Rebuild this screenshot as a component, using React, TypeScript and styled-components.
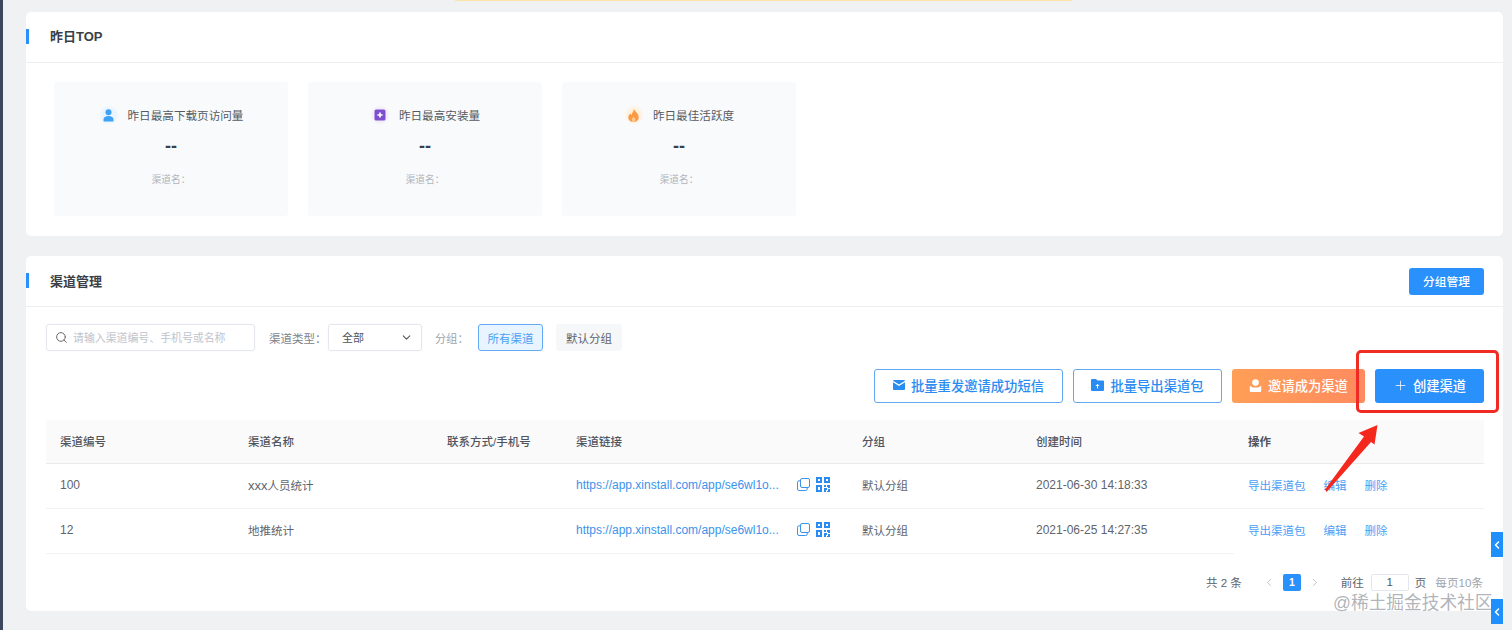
import styled, { createGlobalStyle } from "styled-components";
import { Search, ChevronDown, ChevronLeft, ChevronRight, Plus } from "lucide-react";

const GlobalStyle = createGlobalStyle`
  html, body { margin: 0; padding: 0; background: #f0f1f3; }
  body { font-family: "Liberation Sans", "Noto Sans CJK SC", sans-serif; }
  * { box-sizing: border-box; }
`;

const stats = [
  { kind: "user", title: "昨日最高下载页访问量" },
  { kind: "box", title: "昨日最高安装量" },
  { kind: "fire", title: "昨日最佳活跃度" },
];

const rows = [
  { id: "100", prefix: "xxx", name: "人员统计", time: "2021-06-30 14:18:33" },
  { id: "12", prefix: "", name: "地推统计", time: "2021-06-25 14:27:35" },
];

function StatIcon({ kind }: { kind: string }) {
  if (kind === "user") {
    return (
      <svg width="11" height="13" viewBox="0 0 11 13">
        <circle cx="5.500" cy="3.200" r="3" fill="#3ea2f7" />
        <path d="M.5 12.500V10.500C.5 8.200 2.500 7 5.500 7s5 1.200 5 3.500v2z" fill="#3ea2f7" />
      </svg>
    );
  }
  if (kind === "box") {
    return (
      <svg width="12" height="12" viewBox="0 0 12 12">
        <rect x="0.5" y="0.5" width="11" height="11" rx="1.500" fill="#7f4fd0" />
        <path d="M6 3.400v5.200M3.400 6h5.200" stroke="#fff" strokeWidth="1.600" />
      </svg>
    );
  }
  return (
    <svg width="11" height="13" viewBox="0 0 11 13">
      <path
        d="M5.800 0C6.200 2.300 3.600 3.600 3.900 6 3 5.600 2.700 5 2.700 4.200 1.200 5.500.3 7 .3 8.400.3 11 2.600 13 5.500 13s5.200-2 5.200-4.600C10.700 4.800 7.600 3 5.800 0z"
        fill="#fb9a45"
      />
      <path d="M5.600 7.200C5.400 8.500 3.700 9.200 3.700 10.900 3.700 12 4.500 13 5.500 13s1.900-.9 1.900-2.100c0-1.500-1.200-2.300-1.800-3.700z" fill="#fdc88e" />
    </svg>
  );
}

function CopyIcon() {
  return (
    <svg width="13" height="13" viewBox="0 0 13 13" fill="none" stroke="#3b93ec" strokeWidth="1">
      <rect x="3.500" y="0.500" width="9" height="9" rx="1.500" />
      <path d="M3.500 2.800H2A1.500 1.500 0 0 0 .5 4.300V11A1.500 1.500 0 0 0 2 12.500h6.700A1.500 1.500 0 0 0 10.200 11V9.500" />
    </svg>
  );
}

function QrIcon() {
  return (
    <svg width="14" height="15" viewBox="0 0 14 15" fill="#2a8cf0">
      <path d="M0 0h6v6H0zM2 2v2h2V2zM8 0h6v6H8zM10 2v2h2V2zM0 8h6v7H0zM2 10v3h2v-3z" fillRule="evenodd" />
      <path d="M8 8h2v2H8zM11 8h3v3h-2v-1h-1zM8 11h3v2h-1v2H8zM12 12h2v3h-3v-1h1z" />
    </svg>
  );
}

function MailIcon() {
  return (
    <svg width="12" height="10" viewBox="0 0 12 10" fill="#2a8cf0">
      <path d="M1 0h10a1 1 0 0 1 1 .8L6 4.400 0 .8A1 1 0 0 1 1 0z" />
      <path d="M0 2.300l6 3.600 6-3.600V9a1 1 0 0 1-1 1H1a1 1 0 0 1-1-1z" />
    </svg>
  );
}

function FolderIcon() {
  return (
    <svg width="13" height="12" viewBox="0 0 13 12">
      <path d="M1 0h4l1.500 1.600H12a1 1 0 0 1 1 1V11a1 1 0 0 1-1 1H1a1 1 0 0 1-1-1V1a1 1 0 0 1 1-1z" fill="#2a8cf0" />
      <path d="M6.500 9.500V5.500M4.800 7l1.700-1.700L8.200 7" stroke="#fff" strokeWidth="1" fill="none" />
    </svg>
  );
}

function InviteIcon() {
  return (
    <svg width="13" height="13" viewBox="0 0 13 13" fill="#fff">
      <circle cx="6.500" cy="3.600" r="3.300" />
      <path d="M.8 6.800l3 1.700h5.400l3-1.700V12a1 1 0 0 1-1 1H1.800a1 1 0 0 1-1-1z" />
      <path d="M3.300 7.500h6.400" stroke="#ff9a58" strokeWidth="0.800" />
    </svg>
  );
}

export default function App() {
  return (
    <>
      <GlobalStyle />
      <Page>
        <SideStrip />
        <Main>
          <Notice />
          <Card>
            <CardHeader>
              <CardTitle $lift={3}>昨日TOP</CardTitle>
            </CardHeader>
            <StatGrid>
              {stats.map((s) => (
                <StatCard key={s.kind}>
                  <StatTitle>
                    <IconHalo $kind={s.kind}>
                      <StatIcon kind={s.kind} />
                    </IconHalo>
                    {s.title}
                  </StatTitle>
                  <StatValue>--</StatValue>
                  <StatName>渠道名：</StatName>
                </StatCard>
              ))}
            </StatGrid>
          </Card>

          <ManageCard>
            <CardHeader>
              <CardTitle $lift={2}>渠道管理</CardTitle>
              <SmallButton>分组管理</SmallButton>
            </CardHeader>
            <CardBody>
              <FilterRow>
                <SearchBox>
                  <Search size={13} color="#666" strokeWidth={1.800} />
                  <SearchInput placeholder="请输入渠道编号、手机号或名称" />
                </SearchBox>
                <FilterLabel>渠道类型：</FilterLabel>
                <SelectBox>
                  全部
                  <ChevronDown size={13} color="#555" />
                </SelectBox>
                <GroupLabel>分组：</GroupLabel>
                <GroupTag $active>所有渠道</GroupTag>
                <GroupTag>默认分组</GroupTag>
              </FilterRow>

              <ActionRow>
                <OutlineButton $width={189}>
                  <MailIcon />
                  批量重发邀请成功短信
                </OutlineButton>
                <OutlineButton $width={149}>
                  <FolderIcon />
                  批量导出渠道包
                </OutlineButton>
                <OrangeButton>
                  <InviteIcon />
                  邀请成为渠道
                </OrangeButton>
                <BlueButton>
                  <Plus size={15} color="#fff" strokeWidth={1.200} />
                  创建渠道
                </BlueButton>
              </ActionRow>

              <Table>
                <colgroup>
                  <col width={188} />
                  <col width={199} />
                  <col width={129} />
                  <col width={286} />
                  <col width={174} />
                  <col width={212} />
                  <col width={250} />
                </colgroup>
                <thead>
                  <tr>
                    <Th>渠道编号</Th>
                    <Th>渠道名称</Th>
                    <Th>联系方式/手机号</Th>
                    <Th>渠道链接</Th>
                    <Th>分组</Th>
                    <Th>创建时间</Th>
                    <Th $strong>操作</Th>
                  </tr>
                </thead>
                <tbody>
                  {rows.map((r, i) => (
                    <tr key={r.id}>
                      <Td>
                        <LatinText>{r.id}</LatinText>
                      </Td>
                      <Td>
                        <NamePrefix>{r.prefix}</NamePrefix>
                        {r.name}
                      </Td>
                      <Td />
                      <Td>
                        <LinkCell>
                          <LinkText>https://app.xinstall.com/app/se6wl1o...</LinkText>
                          <CopyIcon />
                          <QrIcon />
                        </LinkCell>
                      </Td>
                      <Td>默认分组</Td>
                      <Td>
                        <LatinText>{r.time}</LatinText>
                      </Td>
                      <Td $noLine={i === rows.length - 1}>
                        <OpLinks>
                          <OpLink>导出渠道包</OpLink>
                          <OpLink>编辑</OpLink>
                          <OpLink>删除</OpLink>
                        </OpLinks>
                      </Td>
                    </tr>
                  ))}
                </tbody>
              </Table>

              <Pagination>
                <PageTotal>共 2 条</PageTotal>
                <PageArrow>
                  <ChevronLeft size={13} color="#c0c4cc" />
                </PageArrow>
                <PageCurrent>1</PageCurrent>
                <PageArrow>
                  <ChevronRight size={13} color="#c0c4cc" />
                </PageArrow>
                <PageGoto>前往</PageGoto>
                <PageInput readOnly value="1" />
                <PageGotoEnd>页</PageGotoEnd>
                <PageSize>每页10条</PageSize>
              </Pagination>
            </CardBody>
          </ManageCard>
        </Main>

        <SideTab $top={532}>
          <ChevronLeft size={14} color="#fff" strokeWidth={3} />
        </SideTab>
        <SideTab $top={599}>
          <ChevronLeft size={14} color="#fff" strokeWidth={3} />
        </SideTab>
        <RedBox />
        <Arrow width="60" height="72" viewBox="1322 423 60 72">
          <polygon points="1377.500,425 1358.500,433 1364,436.500 1325,489.500 1326.500,492 1371,442 1374.500,444.500" fill="#f5281e" />
        </Arrow>
        <Watermark>@稀土掘金技术社区</Watermark>
      </Page>
    </>
  );
}

const Page = styled.div`
  position: relative;
  display: flex;
  width: 1512px;
  height: 630px;
  overflow: hidden;
  background: #f0f1f3;
`;

const SideStrip = styled.div`
  width: 3px;
  flex-shrink: 0;
  background: #3a475c;
`;

const Main = styled.div`
  flex: 1;
  min-width: 0;
  padding: 0 9px 0 23px;
`;

const Notice = styled.div`
  width: 617px;
  height: 1px;
  margin: 0 0 11px 429px;
  background: #fde3a8;
`;

const Card = styled.section`
  height: 224px;
  background: #fff;
  border-radius: 5px;
`;

const ManageCard = styled(Card)`
  height: 355px;
  margin-top: 20px;
`;

const CardHeader = styled.header`
  position: relative;
  display: flex;
  align-items: center;
  justify-content: space-between;
  height: 51px;
  padding: 0 19px 0 24px;
  border-bottom: 1px solid #eceef1;

  &::before {
    content: "";
    position: absolute;
    left: 0;
    top: 17px;
    width: 3px;
    height: 15px;
    background: #2a90fb;
  }
`;

const CardTitle = styled.h2<{ $lift: number }>`
  margin: 0 0 ${(p) => p.$lift}px;
  font-size: 13px;
  font-weight: 700;
  color: #3c3f46;
`;

const SmallButton = styled.button`
  width: 75px;
  height: 27px;
  padding: 0 0 2px;
  border: 0;
  border-radius: 3px;
  background: #2a90fb;
  color: #fff;
  font: 500 11.700px "Liberation Sans", "Noto Sans CJK SC", sans-serif;
`;

const StatGrid = styled.div`
  display: flex;
  gap: 20px;
  padding: 19px 28px 0;
`;

const StatCard = styled.div`
  display: flex;
  flex-direction: column;
  align-items: center;
  width: 234px;
  height: 134px;
  padding-top: 23px;
  background: #f8fafc;
  border-radius: 3px;
`;

const StatTitle = styled.div`
  display: flex;
  align-items: center;
  gap: 9px;
  height: 20px;
  font-size: 11.600px;
  color: #555a63;
`;

const haloColors: Record<string, string> = {
  user: "#e9f4fe",
  box: "#f1ecfa",
  fire: "#fff1df",
};

const IconHalo = styled.span<{ $kind: string }>`
  display: flex;
  align-items: center;
  justify-content: center;
  width: 20px;
  height: 20px;
  border-radius: 50%;
  background: radial-gradient(circle, ${(p) => haloColors[p.$kind]} 45%, rgba(255, 255, 255, 0) 72%);
`;

const StatValue = styled.div`
  margin-top: 9px;
  height: 24px;
  line-height: 24px;
  font-size: 18px;
  font-weight: 700;
  color: #3c3f46;
`;

const StatName = styled.div`
  margin-top: 15px;
  line-height: 14px;
  font-size: 9.700px;
  color: #b0b4bb;
`;

const CardBody = styled.div`
  padding: 17px 19px 0 20px;
`;

const FilterRow = styled.div`
  display: flex;
  align-items: center;
  height: 27px;
`;

const SearchBox = styled.label`
  display: flex;
  align-items: center;
  gap: 5px;
  width: 209px;
  height: 27px;
  padding-left: 8px;
  border: 1px solid #e4e7ed;
  border-radius: 3px;
  box-shadow: 0 0 2px rgba(0, 0, 0, 0.06);
`;

const SearchInput = styled.input`
  flex: 1;
  min-width: 0;
  padding: 0;
  border: 0;
  outline: 0;
  background: transparent;
  font: 10.900px "Liberation Sans", "Noto Sans CJK SC", sans-serif;

  &::placeholder {
    color: #c0c4cc;
    opacity: 1;
  }
`;

const FilterLabel = styled.span`
  margin-left: 14px;
  width: 59px;
  white-space: nowrap;
  font-size: 11.500px;
  color: #80848c;
`;

const SelectBox = styled.div`
  display: flex;
  align-items: center;
  justify-content: space-between;
  width: 94px;
  height: 27px;
  padding: 0 8px 1px 13px;
  border: 1px solid #e4e7ed;
  border-radius: 3px;
  box-shadow: 0 0 2px rgba(0, 0, 0, 0.06);
  font-size: 11px;
  color: #50545c;
`;

const GroupLabel = styled.span`
  margin-left: 13px;
  width: 43px;
  white-space: nowrap;
  font-size: 11.200px;
  color: #a0a4ab;
`;

const GroupTag = styled.div<{ $active?: boolean }>`
  display: flex;
  align-items: center;
  justify-content: center;
  width: ${(p) => (p.$active ? 65 : 66)}px;
  height: 27px;
  margin-right: 13px;
  border: 1px solid ${(p) => (p.$active ? "#62aaf5" : "transparent")};
  border-radius: 3px;
  background: ${(p) => (p.$active ? "#e8f4ff" : "#f6f7f9")};
  font-size: 11.500px;
  color: ${(p) => (p.$active ? "#4aa0f5" : "#60646c")};
`;

const ActionRow = styled.div`
  display: flex;
  justify-content: flex-end;
  gap: 10px;
  height: 34px;
  margin-top: 18px;
`;

const BaseAction = styled.button`
  display: flex;
  align-items: center;
  justify-content: center;
  gap: 6px;
  height: 34px;
  padding: 0 0 2px;
  border-radius: 3px;
  font: 500 13.300px "Liberation Sans", "Noto Sans CJK SC", sans-serif;
`;

const OutlineButton = styled(BaseAction)<{ $width: number }>`
  width: ${(p) => p.$width}px;
  border: 1px solid #62a9f3;
  background: #fff;
  color: #2a8cf0;
`;

const OrangeButton = styled(BaseAction)`
  width: 133px;
  border: 0;
  background: linear-gradient(90deg, #ff9f57, #ff8b5f);
  color: #fff;
`;

const BlueButton = styled(BaseAction)`
  width: 109px;
  gap: 5px;
  border: 0;
  background: #2a90fb;
  color: #fff;
`;

const Table = styled.table`
  width: 1438px;
  margin-top: 17px;
  border-collapse: collapse;
  table-layout: fixed;
`;

const Th = styled.th<{ $strong?: boolean }>`
  height: 43px;
  padding: 0 14px;
  background: #fafafb;
  border-bottom: 1px solid #e9ebef;
  text-align: left;
  font-size: 11.500px;
  font-weight: ${(p) => (p.$strong ? 700 : 500)};
  color: #50545c;
`;

const Td = styled.td<{ $noLine?: boolean }>`
  height: 45px;
  padding: 0 14px 2px;
  border-bottom: 1px solid ${(p) => (p.$noLine ? "transparent" : "#f1f2f5")};
  font-size: 11.500px;
  color: #60646c;
`;

const LatinText = styled.span`
  font-size: 12px;
`;

const NamePrefix = styled.span`
  font-size: 13px;
`;

const LinkCell = styled.div`
  display: flex;
  align-items: center;
`;

const LinkText = styled.span`
  width: 208px;
  margin-right: 13px;
  white-space: nowrap;
  font-size: 12px;
  color: #3b93ec;

  & + svg {
    margin-right: 6px;
    flex-shrink: 0;
  }
`;

const OpLinks = styled.div`
  display: flex;
  gap: 18px;
`;

const OpLink = styled.a`
  color: #4aa0f5;
  font-size: 11.500px;
`;

const Pagination = styled.div`
  display: flex;
  align-items: center;
  justify-content: flex-end;
  height: 17px;
  margin-top: 20px;
  padding-right: 1px;
  font-size: 11.500px;
  color: #60646c;
`;

const PageTotal = styled.span`
  margin-right: 13px;
`;

const PageArrow = styled.span`
  display: flex;
  justify-content: center;
  width: 12px;
  margin: 0 8px;
`;

const PageCurrent = styled.span`
  display: flex;
  align-items: center;
  justify-content: center;
  width: 18px;
  height: 17px;
  background: #2a90fb;
  border-radius: 2px;
  color: #fff;
  font-size: 10.500px;
  font-weight: 700;
`;

const PageGoto = styled.span`
  margin-left: 12px;
`;

const PageInput = styled.input`
  width: 38px;
  height: 17px;
  margin-left: 7px;
  padding: 0;
  border: 1px solid #e4e7ed;
  border-radius: 2px;
  outline: 0;
  text-align: center;
  font: 11.500px "Liberation Sans", sans-serif;
  color: #50545c;
`;

const PageGotoEnd = styled.span`
  margin-left: 6px;
`;

const PageSize = styled.span`
  margin-left: 9px;
  color: #a0a4ab;
  font-size: 11.600px;
`;

const SideTab = styled.div<{ $top: number }>`
  position: absolute;
  left: 1491px;
  top: ${(p) => p.$top}px;
  display: flex;
  align-items: center;
  justify-content: center;
  width: 12px;
  height: 25px;
  background: #1f8ffb;
`;

const RedBox = styled.div`
  position: absolute;
  left: 1356px;
  top: 350px;
  width: 143px;
  height: 63px;
  border: 3px solid #ef2b24;
  border-radius: 5px;
`;

const Arrow = styled.svg`
  position: absolute;
  left: 1322px;
  top: 423px;
`;

const Watermark = styled.div`
  position: absolute;
  left: 1333px;
  top: 588px;
  white-space: nowrap;
  font-size: 17.700px;
  color: rgba(110, 115, 125, 0.55);
`;
